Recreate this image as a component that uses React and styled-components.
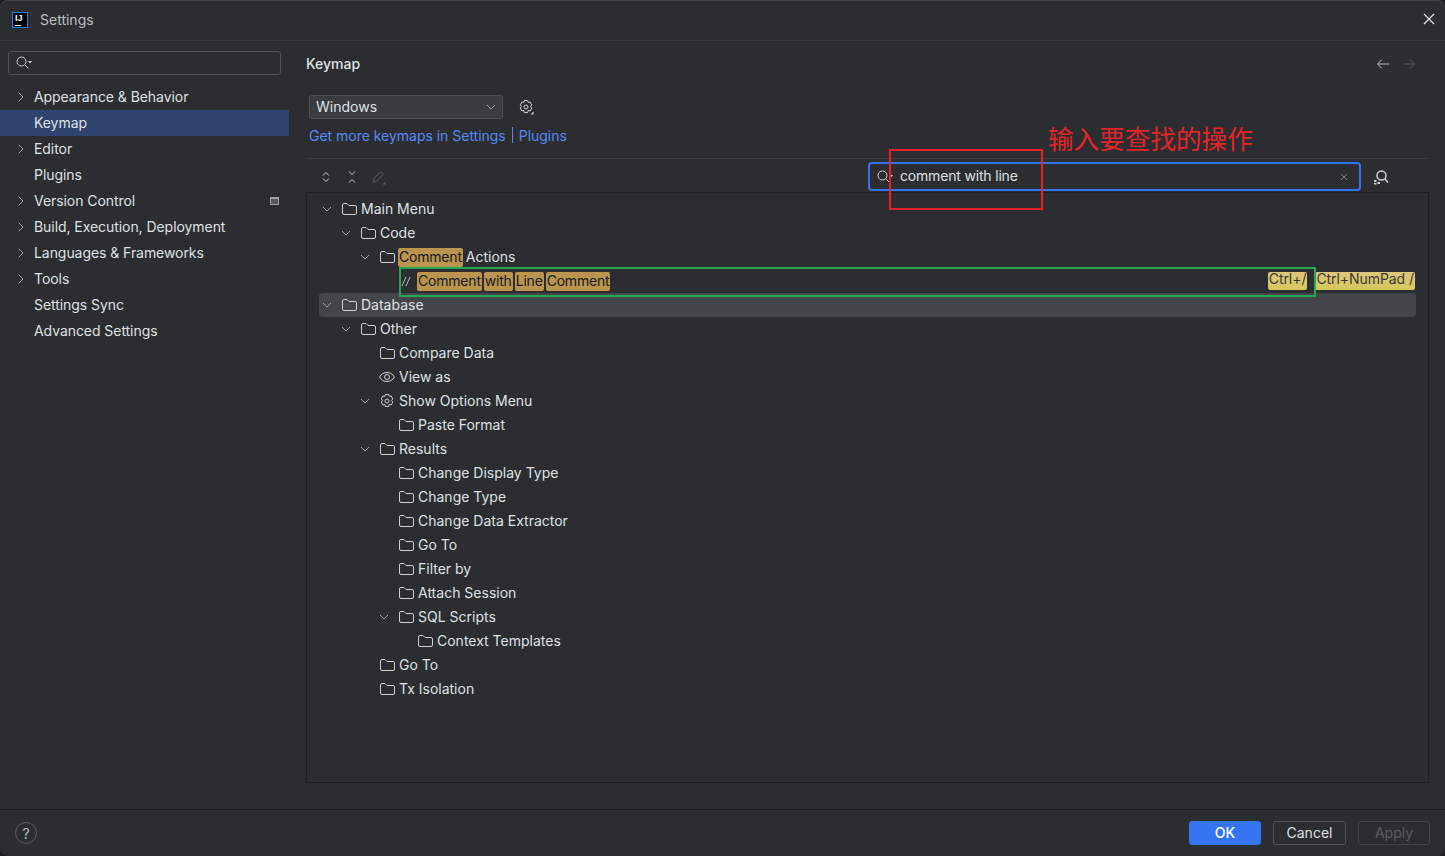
import React from "react";
import styled, { createGlobalStyle } from "styled-components";

const GlobalStyle = createGlobalStyle`
  html, body { margin: 0; padding: 0; background: #1c1d1f; }
  body { font-family: Inter, "Noto Sans", sans-serif; font-size: 14px; overflow: hidden; }
`;

const sidebarItems = [
  { label: "Appearance & Behavior", arrow: true },
  { label: "Keymap", selected: true },
  { label: "Editor", arrow: true },
  { label: "Plugins" },
  { label: "Version Control", arrow: true, badge: true },
  { label: "Build, Execution, Deployment", arrow: true },
  { label: "Languages & Frameworks", arrow: true },
  { label: "Tools", arrow: true },
  { label: "Settings Sync" },
  { label: "Advanced Settings" },
];

const treeRows = [
  { level: 0, open: true, label: "Main Menu" },
  { level: 1, open: true, label: "Code" },
  { level: 2, open: true, words: ["Comment"], label: "Actions" },
  { level: 3, icon: "comment", words: ["Comment", "with", "Line", "Comment"], keys: ["Ctrl+/", "Ctrl+NumPad /"] },
  { level: 0, open: true, label: "Database", hovered: true },
  { level: 1, open: true, label: "Other" },
  { level: 2, label: "Compare Data" },
  { level: 2, icon: "eye", label: "View as" },
  { level: 2, open: true, icon: "gear", label: "Show Options Menu" },
  { level: 3, label: "Paste Format" },
  { level: 2, open: true, label: "Results" },
  { level: 3, label: "Change Display Type" },
  { level: 3, label: "Change Type" },
  { level: 3, label: "Change Data Extractor" },
  { level: 3, label: "Go To" },
  { level: 3, label: "Filter by" },
  { level: 3, label: "Attach Session" },
  { level: 3, open: true, label: "SQL Scripts" },
  { level: 4, label: "Context Templates" },
  { level: 2, label: "Go To" },
  { level: 2, label: "Tx Isolation" },
];

const Icon = ({ size = 16, children, color = "#ced0d6" }) => (
  <svg width={size} height={size} viewBox="0 0 16 16" fill="none" stroke={color} strokeWidth="1" style={{ flexShrink: 0, display: "block", overflow: "visible" }}>
    {children}
  </svg>
);

const ChevronRight = () => (
  <Icon color="#9da0a8"><path d="M6.5 3.5 11 8l-4.500 4.500" /></Icon>
);

const ChevronDown = () => (
  <Icon color="#9da0a8"><path d="M4 6l4 4 4-4" /></Icon>
);

const FolderIcon = () => (
  <Icon>
    <path d="M.5 4A1.500 1.500 0 0 1 2 2.500h3l2 2h6A1.500 1.500 0 0 1 14.500 6v6a1.500 1.500 0 0 1-1.500 1.500H2A1.500 1.500 0 0 1 .5 12z" />
  </Icon>
);

const EyeIcon = () => (
  <Icon>
    <g transform="translate(-1 0)">
      <path d="M.5 8C2.500 4.800 5 3.500 8 3.500s5.500 1.300 7.500 4.500c-2 3.200-4.500 4.500-7.500 4.500S2.500 11.200.5 8z" />
      <circle cx="8" cy="8" r="2.500" />
    </g>
  </Icon>
);

const gearPath = "M6.300 1.500h3.400l.5 2 1.900-.6 1.700 3-1.400 1.600 1.400 1.500-1.700 3-1.900-.6-.5 2.100H6.300l-.5-2.100-1.900.6-1.700-3 1.400-1.500-1.400-1.600 1.700-3 1.900.6z";

const GearIcon = () => (
  <Icon>
    <g transform="translate(-1 0)">
      <path d={gearPath} />
      <circle cx="8" cy="8" r="2" />
    </g>
  </Icon>
);

const GearMenuIcon = () => (
  <Icon>
    <path d={gearPath} />
    <circle cx="8" cy="8" r="2" />
    <path d="M15.500 12.500v3h-3z" fill="#ced0d6" stroke="none" />
  </Icon>
);

const SearchIcon = ({ color = "#ced0d6" }) => (
  <svg width="18" height="16" viewBox="0 0 18 16" fill="none" stroke={color} style={{ display: "block", flexShrink: 0 }}>
    <circle cx="6.500" cy="6.500" r="4.500" />
    <path d="m10 10 3.500 3.500" />
    <path d="M13 6h4l-2 2.500z" fill={color} stroke="none" />
  </svg>
);

const rowIcons = {
  eye: <EyeIcon />,
  gear: <GearIcon />,
  comment: (
    <Icon color="#b4b8bf"><path d="M3 13l4-9M7 13l4-9" /></Icon>
  ),
};

const App = () => {
  return (
    <Window>
      <GlobalStyle />
      <TitleBar>
        <AppLogo><span>IJ</span><i /></AppLogo>
        <TitleText>Settings</TitleText>
        <CloseButton>
          <svg width="16" height="16" viewBox="0 0 16 16" stroke="#e6e7ea" strokeWidth="1.200"><path d="m3 3 10 10M13 3 3 13" /></svg>
        </CloseButton>
      </TitleBar>

      <Body>
        <Sidebar>
          <SideSearch><SearchIcon /></SideSearch>
          <SideList>
            {sidebarItems.map((item) => (
              <SideRow key={item.label} selected={item.selected}>
                <SideArrow>{item.arrow && <ChevronRight />}</SideArrow>
                <SideLabel>{item.label}</SideLabel>
                {item.badge && <SideBadge />}
              </SideRow>
            ))}
          </SideList>
        </Sidebar>

        <Main>
          <MainHeader>
            <Heading>Keymap</Heading>
            <NavArrows>
              <Icon color="#b4b8bf"><path d="M14 8H3M7 3.500 2.500 8 7 12.500" /></Icon>
              <Icon color="#55585e"><path d="M2 8h11M9 3.500 13.500 8 9 12.500" /></Icon>
            </NavArrows>
          </MainHeader>

          <SchemeRow>
            <SchemeSelect>
              <SchemeName>Windows</SchemeName>
              <ChevronDown />
            </SchemeSelect>
            <GearMenuIcon />
          </SchemeRow>

          <LinkRow>
            <a>Get more keymaps in Settings</a>
            <LinkDivider />
            <a>Plugins</a>
          </LinkRow>

          <Toolbar>
            <ToolIcons>
              <Icon><path d="M5 6.500 8 3.500l3 3M5 9.500l3 3 3-3" /></Icon>
              <Icon><path d="M5 2.500l3 3 3-3M5 13.500l3-3 3 3" /></Icon>
              <Icon color="#5a5d63">
                <path d="M3 13l.8-3.500L10.500 2.800l2.700 2.700L6.500 12.200z" />
                <path d="M15.500 12.500v3h-3z" fill="#5a5d63" stroke="none" />
              </Icon>
            </ToolIcons>
            <FilterBox>
              <SearchIcon />
              <FilterText>comment with line</FilterText>
              <Icon color="#7a7d83"><path d="m5 5 6 6M11 5l-6 6" /></Icon>
            </FilterBox>
            <FindButton>
              <Icon>
                <circle cx="8.500" cy="6.500" r="4.500" strokeWidth="1.500" />
                <path d="m12 10 3 3.500" strokeWidth="1.500" />
                <path d="M1 11h2.500v2H1zM4.500 13h2.500v2H4.500zM1 14h2.500v1.500H1z" fill="#ced0d6" stroke="none" />
              </Icon>
            </FindButton>
          </Toolbar>

          <TreeBox>
            {treeRows.map((row, index) => (
              <TreeRow key={index} level={row.level} hovered={row.hovered}>
                <TreeArrow>{row.open && <ChevronDown />}</TreeArrow>
                <TreeIcon>{rowIcons[row.icon] || <FolderIcon />}</TreeIcon>
                {row.words && (
                  <Matches>
                    {row.words.map((word, i) => <Match key={i}>{word}</Match>)}
                  </Matches>
                )}
                {row.label && <TreeLabel>{row.label}</TreeLabel>}
                {row.keys && (
                  <Keys>
                    {row.keys.map((k) => <KeyTag key={k}>{k}</KeyTag>)}
                  </Keys>
                )}
              </TreeRow>
            ))}
          </TreeBox>
        </Main>
      </Body>

      <Footer>
        <HelpButton>?</HelpButton>
        <FooterButtons>
          <PrimaryButton width={72}>OK</PrimaryButton>
          <FooterButton width={73}>Cancel</FooterButton>
          <FooterButton width={72} disabled>Apply</FooterButton>
        </FooterButtons>
      </Footer>

      <AnnotationText>输入要查找的操作</AnnotationText>
      <RedMark />
      <GreenMark />
    </Window>
  );
};

export default App;

const Window = styled.div`
  position: relative;
  width: 1445px;
  height: 856px;
  display: flex;
  flex-direction: column;
  background: #2b2d30;
  color: #dfe1e5;
  border-radius: 8px;
  box-shadow: inset 0 1px 0 #43454a;
  overflow: hidden;
`;

const TitleBar = styled.header`
  height: 40px;
  flex-shrink: 0;
  display: flex;
  align-items: center;
  padding: 0 8px 0 12px;
  border-bottom: 1px solid #393b40;
`;

const AppLogo = styled.div`
  position: relative;
  width: 16px;
  height: 16px;
  box-sizing: border-box;
  padding-left: 2px;
  background: #000;
  border: 1px solid #1f7ff0;
  color: #fff;
  font-family: "Liberation Sans", sans-serif;
  font-size: 9px;
  font-weight: 700;
  line-height: 10px;

  i {
    position: absolute;
    left: 2px;
    bottom: 1px;
    width: 6px;
    height: 1px;
    background: #fff;
  }
`;

const TitleText = styled.span`
  margin: 0 0 2px 12px;
  color: #bcbec4;
`;

const CloseButton = styled.div`
  margin-left: auto;
`;

const Body = styled.div`
  flex: 1;
  display: flex;
  min-height: 0;
`;

const Sidebar = styled.aside`
  width: 289px;
  flex-shrink: 0;
  padding-top: 10px;
  box-sizing: border-box;
`;

const SideSearch = styled.div`
  width: 273px;
  height: 24px;
  margin-left: 8px;
  padding-left: 6px;
  box-sizing: border-box;
  display: flex;
  align-items: center;
  border: 1px solid #4e5157;
  border-radius: 3px;
`;

const SideList = styled.nav`
  margin-top: 9px;
`;

const SideRow = styled.div`
  height: 26px;
  display: flex;
  align-items: center;
  padding: 0 9px 0 12px;
  background: ${(props) => (props.selected ? "#2e436e" : "transparent")};
`;

const SideArrow = styled.div`
  width: 16px;
  height: 16px;
  margin-right: 6px;
`;

const SideLabel = styled.span`
  margin-bottom: 2px;
  letter-spacing: -0.06px;
`;

const SideBadge = styled.div`
  margin-left: auto;
  width: 9px;
  height: 8px;
  box-sizing: border-box;
  border: 1px solid #9da0a8;
  border-top-width: 2px;
  background: #55585e;
  margin-right: 1px;
`;

const Main = styled.main`
  flex: 1;
  min-width: 0;
  display: flex;
  flex-direction: column;
  padding: 13px 16px 26px 17px;
`;

const MainHeader = styled.div`
  height: 20px;
  display: flex;
  align-items: center;
  justify-content: space-between;
`;

const Heading = styled.h1`
  margin: 0 0 2px;
  font-size: 14px;
  font-weight: 500;
`;

const NavArrows = styled.div`
  display: flex;
  gap: 10px;
  margin-right: 12px;
`;

const SchemeRow = styled.div`
  margin: 21px 0 0 3px;
  display: flex;
  align-items: center;
  gap: 15px;
`;

const SchemeSelect = styled.div`
  width: 194px;
  height: 24px;
  box-sizing: border-box;
  display: flex;
  align-items: center;
  justify-content: space-between;
  padding: 0 3px 0 6px;
  background: #393b40;
  border: 1px solid #4e5157;
  border-radius: 3px;
`;

const SchemeName = styled.span`
  margin-bottom: 2px;
`;

const LinkRow = styled.div`
  margin: 6px 0 1px 3px;
  height: 20px;
  display: flex;
  align-items: center;
  color: #548af7;
  letter-spacing: -0.02px;
`;

const LinkDivider = styled.span`
  width: 1px;
  height: 16px;
  margin: 0 6px;
  background: #548af7;
`;

const Toolbar = styled.div`
  margin-top: 12px;
  height: 34px;
  flex-shrink: 0;
  box-sizing: border-box;
  display: flex;
  align-items: center;
  border-top: 1px solid #393b40;
  padding: 2px 0 0 12px;
`;

const ToolIcons = styled.div`
  display: flex;
  gap: 10px;
`;

const FilterBox = styled.div`
  margin-left: 482px;
  width: 493px;
  height: 29px;
  box-sizing: border-box;
  display: flex;
  align-items: center;
  padding: 0 7px 0 6px;
  border: 2px solid #3574f0;
  border-radius: 4px;
`;

const FilterText = styled.span`
  flex: 1;
  margin: 0 0 2px 6px;
  letter-spacing: -0.18px;
`;

const FindButton = styled.div`
  margin-left: 12px;
`;

const TreeBox = styled.section`
  flex: 1;
  min-height: 0;
  box-sizing: border-box;
  padding: 4px 12px;
  border: 1px solid #1e1f22;
`;

const TreeRow = styled.div`
  height: 24px;
  display: flex;
  align-items: center;
  padding-left: ${(props) => props.level * 19}px;
  padding-right: 1px;
  border-radius: 4px;
  background: ${(props) => (props.hovered ? "#43454a" : "transparent")};
`;

const TreeArrow = styled.div`
  width: 16px;
  height: 16px;
  margin-right: 7px;
  flex-shrink: 0;
`;

const TreeIcon = styled.div`
  width: 16px;
  height: 16px;
  margin-right: 3px;
  flex-shrink: 0;
`;

const TreeLabel = styled.span`
  margin-bottom: 1px;
`;

const Matches = styled.div`
  display: flex;
  gap: 2px;
  margin: 0 3px 0 -1px;
`;

const Match = styled.span`
  height: 19px;
  line-height: 18px;
  padding: 0 1px;
  border-radius: 2px;
  background: #bb9450;
  color: #17181a;
  letter-spacing: -0.2px;
`;

const Keys = styled.div`
  margin-left: auto;
  display: flex;
  gap: 8px;
`;

const KeyTag = styled.span`
  height: 18px;
  line-height: 14px;
  padding: 0 1px;
  border-radius: 2px;
  background: linear-gradient(#dfc57a, #d6c85c);
  color: #3a3a34;
  letter-spacing: -0.06px;
`;

const Footer = styled.footer`
  height: 47px;
  flex-shrink: 0;
  box-sizing: border-box;
  display: flex;
  align-items: center;
  justify-content: space-between;
  padding: 0 15px;
  border-top: 1px solid #1e1f22;
`;

const HelpButton = styled.div`
  width: 22px;
  height: 22px;
  box-sizing: border-box;
  display: flex;
  align-items: center;
  justify-content: center;
  border: 1px solid #5a5d63;
  border-radius: 50%;
  color: #bcbec4;
`;

const FooterButtons = styled.div`
  display: flex;
  gap: 12px;
`;

const FooterButton = styled.button`
  width: ${(props) => props.width}px;
  height: 24px;
  padding: 0 0 2px;
  box-sizing: border-box;
  font: inherit;
  color: ${(props) => (props.disabled ? "#5a5d63" : "#dfe1e5")};
  background: transparent;
  border: 1px solid ${(props) => (props.disabled ? "#43454a" : "#4e5157")};
  border-radius: 3px;
`;

const PrimaryButton = styled(FooterButton)`
  color: #fff;
  background: #3574f0;
  border-color: #3574f0;
  font-weight: 500;
`;

const AnnotationText = styled.div`
  position: absolute;
  left: 1048px;
  top: 120px;
  font-family: "Noto Sans CJK SC", sans-serif;
  font-size: 25.6px;
  line-height: 36px;
  color: #e5242a;
  white-space: nowrap;
`;

const RedMark = styled.div`
  position: absolute;
  left: 889px;
  top: 149px;
  width: 154px;
  height: 61px;
  box-sizing: border-box;
  border: 2px solid #e8222a;
`;

const GreenMark = styled.div`
  position: absolute;
  left: 399px;
  top: 267px;
  width: 917px;
  height: 30px;
  box-sizing: border-box;
  border: 2px solid #22a850;
`;
